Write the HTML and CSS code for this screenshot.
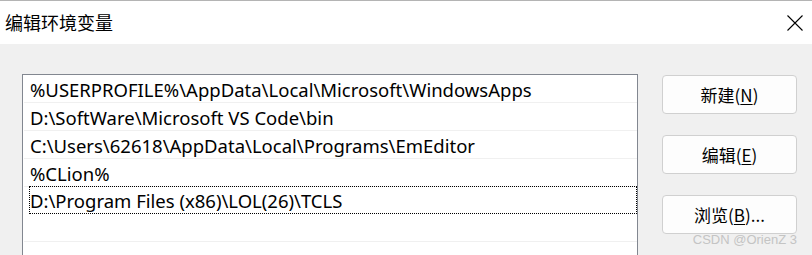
FILE: index.html
```html
<!DOCTYPE html>
<html lang="zh-CN">
<head>
  <meta charset="UTF-8">
  <title>编辑环境变量</title>
  <link rel="stylesheet" href="styles.css">
</head>
<body>
  <div class="dialog">
    <!-- 标题栏 -->
    <div class="titlebar">
      <span class="title">编辑环境变量</span>
      <svg class="close" width="16" height="16" viewBox="0 0 16 16">
        <path d="M0.5 0.5 L15.5 15.5 M15.5 0.5 L0.5 15.5" stroke="#000" stroke-width="1.1" fill="none"/>
      </svg>
    </div>

    <div class="content">
      <!-- 路径列表 -->
      <div class="path-list">
        <div class="row"><span class="row-text">%USERPROFILE%\AppData\Local\Microsoft\WindowsApps</span></div>
        <div class="row"><span class="row-text">D:\SoftWare\Microsoft VS Code\bin</span></div>
        <div class="row"><span class="row-text">C:\Users\62618\AppData\Local\Programs\EmEditor</span></div>
        <div class="row"><span class="row-text">%CLion%</span></div>
        <div class="row focused"><span class="row-text">D:\Program Files (x86)\LOL(26)\TCLS</span></div>
        <div class="row"><span class="row-text"></span></div>
        <div class="row"><span class="row-text"></span></div>
      </div>

      <!-- 按钮 -->
      <div class="buttons">
        <button>新建(<u>N</u>)</button>
        <button>编辑(<u>E</u>)</button>
        <button>浏览(<u>B</u>)...</button>
      </div>
    </div>

    <div class="watermark">CSDN @OrienZ 3</div>
  </div>
</body>
</html>
```

FILE: styles.css
```css
/* 기본 리셋 */
* { margin: 0; padding: 0; box-sizing: border-box; }
html, body {
  width: 812px;
  height: 255px;
  overflow: hidden;
}
body {
  font-family: "Noto Sans", "Noto Sans CJK SC", sans-serif;
  background-color: #f0f0f0;
  color: #000;
}
.dialog {
  position: relative;
  height: 255px;
}
/* 标题栏 */
.titlebar {
  height: 44px;
  background-color: #fff;
  border-top: 1px solid #b4b4b4;
  display: flex;
  align-items: center;
  justify-content: space-between;
  padding: 0 9px 0 5px;
}
.title {
  font-family: "Noto Sans CJK SC", sans-serif;
  font-size: 18px;
  margin-top: -2px;
}
.close {
  margin-top: 1px;
}
/* 内容 */
.content {
  display: flex;
  gap: 24px;
  padding: 30px 0 0 22px;
}
.path-list {
  width: 616px;
  height: 181px;
  overflow: hidden;
  background-color: #fff;
  border: 1px solid #828790;
  border-bottom: none;
  font-size: 18.5px;
}
.row {
  height: 28px;
  border-bottom: 1px solid #f0f0f0;
  margin-left: 1px;
  padding-left: 5px;
}
.row-text {
  display: block;
  height: 27px;
  line-height: 25px;
  padding: 2px 0 0 1px;
  white-space: nowrap;
}
.row.focused {
  border-bottom: none;
}
.row.focused .row-text {
  height: 28px;
  margin-top: -1px;
  padding: 2px 0 0 0;
  border: 1px dotted #000;
  line-height: 24px;
}
/* 按钮 */
.buttons {
  display: flex;
  flex-direction: column;
  gap: 21px;
  padding-top: 1px;
}
.buttons button {
  width: 135px;
  height: 39px;
  background-color: #fdfdfd;
  border: 1px solid #d0d0d0;
  border-radius: 4px;
  font-family: "Noto Sans CJK SC", sans-serif;
  font-size: 17px;
  color: #000;
}
.buttons u {
  text-underline-offset: 2px;
}
.watermark {
  position: absolute;
  right: 15px;
  bottom: 8px;
  font-family: "Liberation Sans", sans-serif;
  font-size: 13px;
  color: #c4c4c4;
}
```
